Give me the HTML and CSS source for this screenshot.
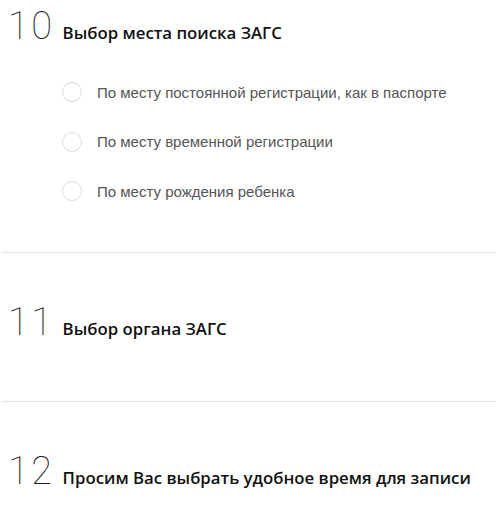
FILE: index.html
```html
<!DOCTYPE html>
<html lang="ru">
<head>
<meta charset="utf-8">
<link rel="stylesheet" href="styles.css">
</head>
<body>
<div class="page">
  <section class="step step-first">
    <div class="step-head">
      <span class="step-num">10</span>
      <h2 class="step-title">Выбор места поиска ЗАГС</h2>
    </div>
    <ul class="options">
      <li class="option"><span class="radio"></span><span class="option-label">По месту постоянной регистрации, как в паспорте</span></li>
      <li class="option"><span class="radio"></span><span class="option-label">По месту временной регистрации</span></li>
      <li class="option"><span class="radio"></span><span class="option-label">По месту рождения ребенка</span></li>
    </ul>
  </section>
  <section class="step">
    <div class="step-head">
      <span class="step-num">11</span>
      <h2 class="step-title">Выбор органа ЗАГС</h2>
    </div>
  </section>
  <section class="step step-last">
    <div class="step-head">
      <span class="step-num">12</span>
      <h2 class="step-title">Просим Вас выбрать удобное время для записи</h2>
    </div>
  </section>
</div>
</body>
</html>
```
FILE: styles.css
```css
html, body {
  margin: 0;
  padding: 0;
  background: #fff;
}
.page {
  width: 496px;
  padding-left: 2px;
  box-sizing: border-box;
}
.step {
  border-bottom: 1px solid #e3e3e3;
  padding: 49px 0 59px;
}
.step-first {
  padding-top: 6px;
  padding-bottom: 51px;
}
.step-last {
  border-bottom: none;
  padding-bottom: 10px;
}
.step-head {
  display: flex;
  align-items: baseline;
  gap: 8px;
  padding-left: 6px;
  height: 40px;
}
.step-num {
  font-family: Roboto, sans-serif;
  font-weight: 100;
  font-size: 38px;
  line-height: 40px;
  color: #1a1a1a;
  letter-spacing: 2.5px;
}
.step-title {
  margin: 0;
  font-family: "Open Sans", sans-serif;
  font-weight: 600;
  font-size: 16.8px;
  line-height: 20px;
  color: #111;
}
.options {
  list-style: none;
  margin: 0;
  padding: 36px 0 0 60px;
  display: flex;
  flex-direction: column;
  gap: 29.5px;
}
.option {
  display: flex;
  align-items: center;
  gap: 15px;
  height: 20px;
}
.radio {
  width: 18px;
  height: 18px;
  border: 1px solid #dcdcdc;
  border-radius: 50%;
  flex: none;
}
.option-label {
  font-family: "Liberation Sans", Arial, sans-serif;
  font-size: 15px;
  color: #555;
}
```
